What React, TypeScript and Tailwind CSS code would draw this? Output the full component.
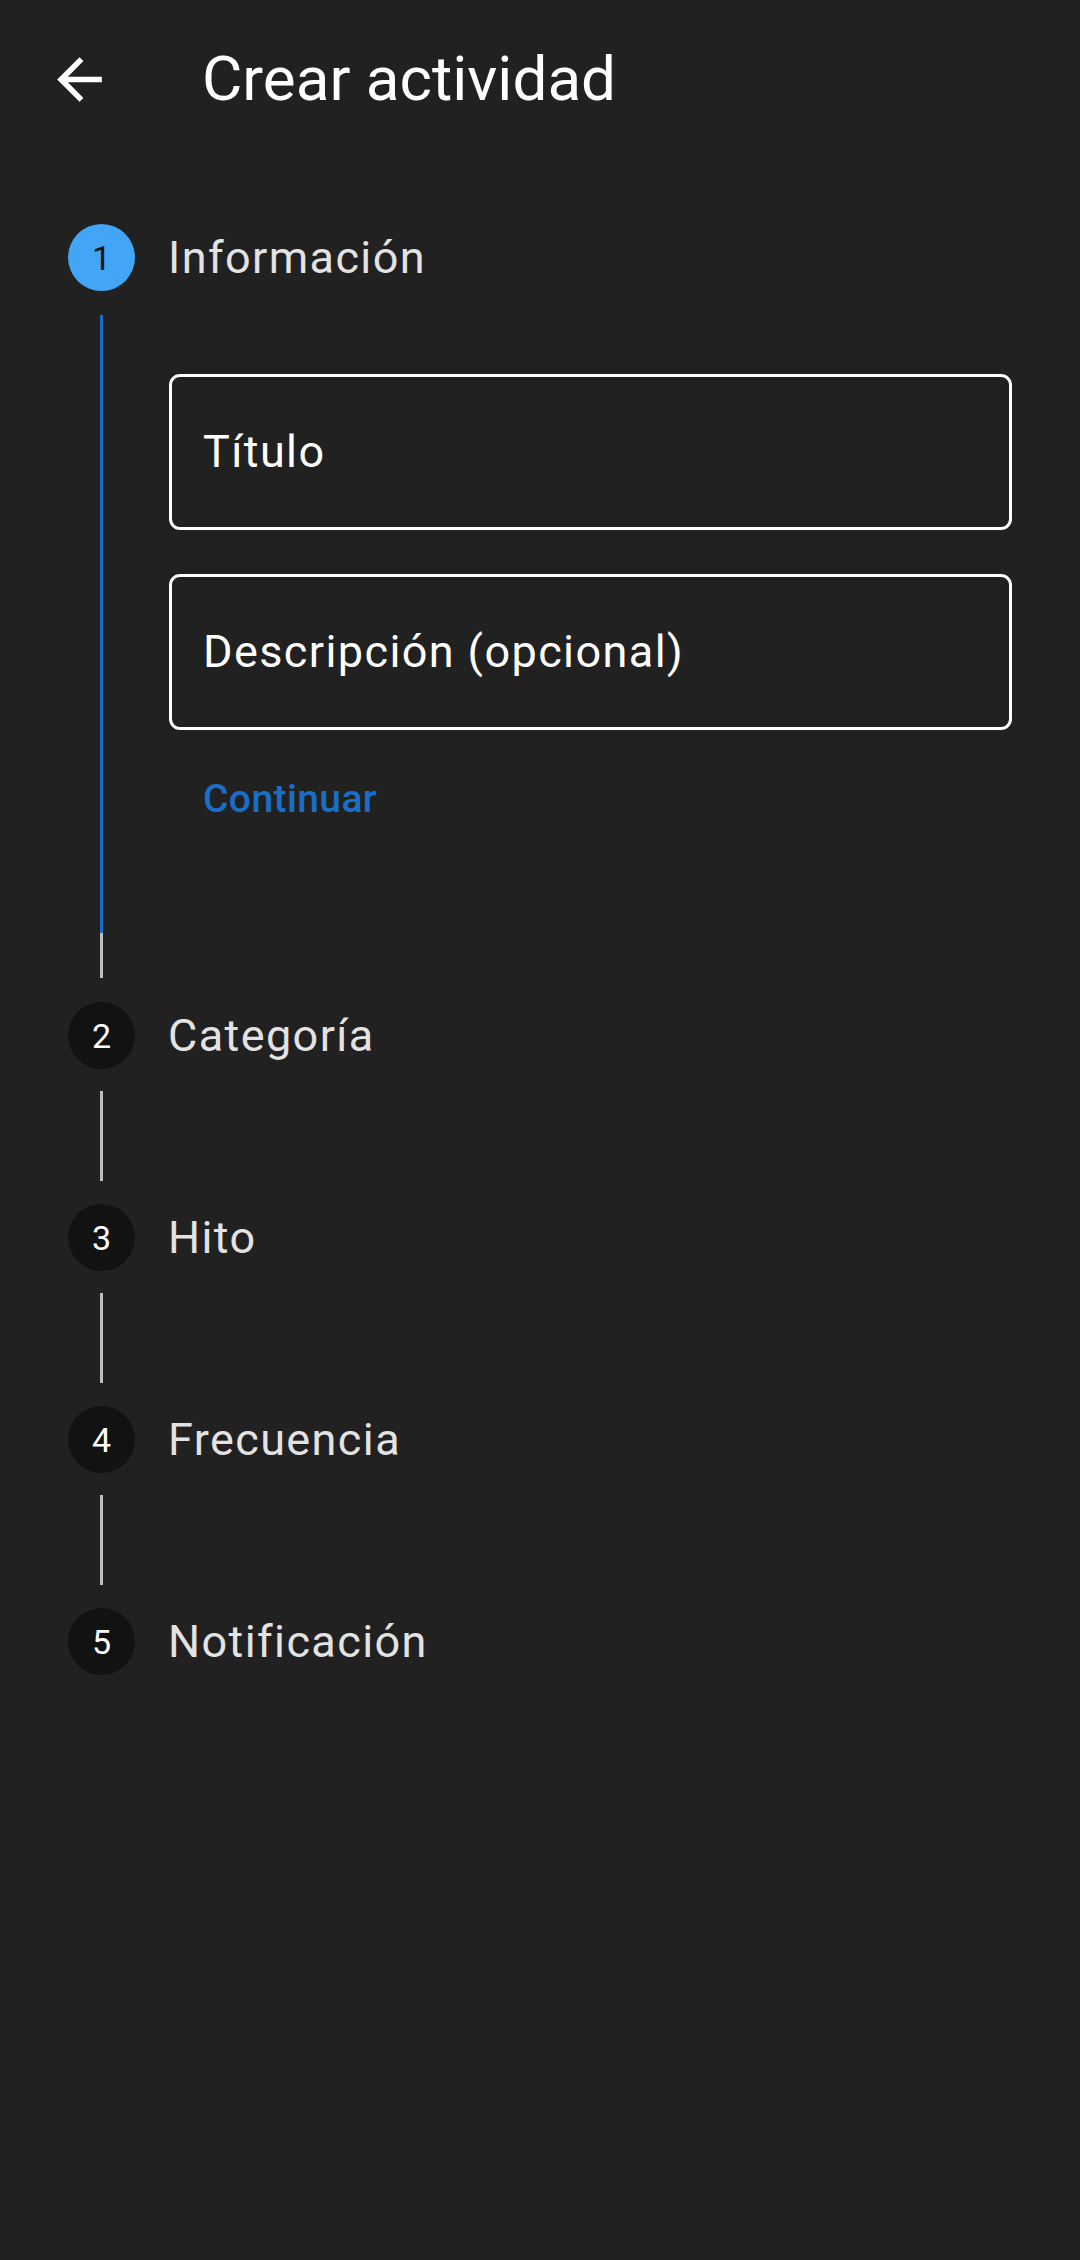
import { ReactNode } from 'react'

const steps = ['Categoría', 'Hito', 'Frecuencia', 'Notificación']

function StepHeader({
  n,
  label,
  active,
}: {
  n: number
  label: string
  active?: boolean
}) {
  return (
    <div className="flex items-center pl-[68px]">
      <div
        className={`
          flex
          items-center
          justify-center
          w-[67px]
          h-[67px]
          rounded-full
          text-[34px]
          leading-none
          ${active ? 'bg-[#42a5f5] text-[#141414]' : 'bg-[#121212] text-white'}
        `}
      >
        {n}
      </div>
      <div className="ml-[33px] text-[45px] leading-[54px] tracking-[1.4px] text-[#e3e3e3]">
        {label}
      </div>
    </div>
  )
}

function Connector({ children }: { children?: ReactNode }) {
  return (
    <div className="flex pl-[68px]">
      <div className="flex flex-col items-center w-[67px] pt-[22px] pb-[23px]">
        <div className="w-[3px] h-[90px] bg-[#bdbdbd]" />
      </div>
      {children}
    </div>
  )
}

function Field({ label }: { label: string }) {
  return (
    <div
      className="
        flex
        items-center
        h-[156px]
        w-[843px]
        border-[3px]
        border-white
        rounded-[11px]
        pl-[31px]
        text-[45px]
        text-white
        tracking-[1.4px]
      "
    >
      {label}
    </div>
  )
}

export default function App() {
  return (
    <div
      className="min-h-[2260px] w-[1080px] bg-[#212121]"
      style={{ fontFamily: 'Roboto, "Noto Sans", sans-serif' }}
    >
      {/* app bar */}
      <div className="flex items-center h-[158px] pl-[46px]">
        <svg width="67" height="67" viewBox="0 0 24 24" fill="white">
          <path d="M20 11H7.83l5.59-5.59L12 4l-8 8 8 8 1.41-1.41L7.83 13H20v-2z" />
        </svg>
        <div className="ml-[89px] text-[62px] leading-none text-white">
          Crear actividad
        </div>
      </div>

      {/* stepper */}
      <div className="pt-[66px]">
        <StepHeader n={1} label="Información" active />
        <div className="flex pl-[68px]">
          <div className="flex flex-col items-center w-[67px] pt-[24px] pb-[24px]">
            <div className="w-[3px] h-[618px] bg-[#1b6ec8]" />
            <div className="w-[3px] h-[45px] bg-[#bdbdbd]" />
          </div>
          <div className="flex flex-col ml-[34px] pt-[83px]">
            <Field label="Título" />
            <div className="mt-[44px]">
              <Field label="Descripción (opcional)" />
            </div>
            <div className="mt-[45px] pl-[34px] h-[48px] flex items-center text-[39px] font-medium text-[#1b6ec8] tracking-[0.4px]">
              Continuar
            </div>
          </div>
        </div>
        {steps.map((s, i) => (
          <div key={s}>
            <StepHeader n={i + 2} label={s} />
            {i < steps.length - 1 && <Connector />}
          </div>
        ))}
      </div>
    </div>
  )
}
